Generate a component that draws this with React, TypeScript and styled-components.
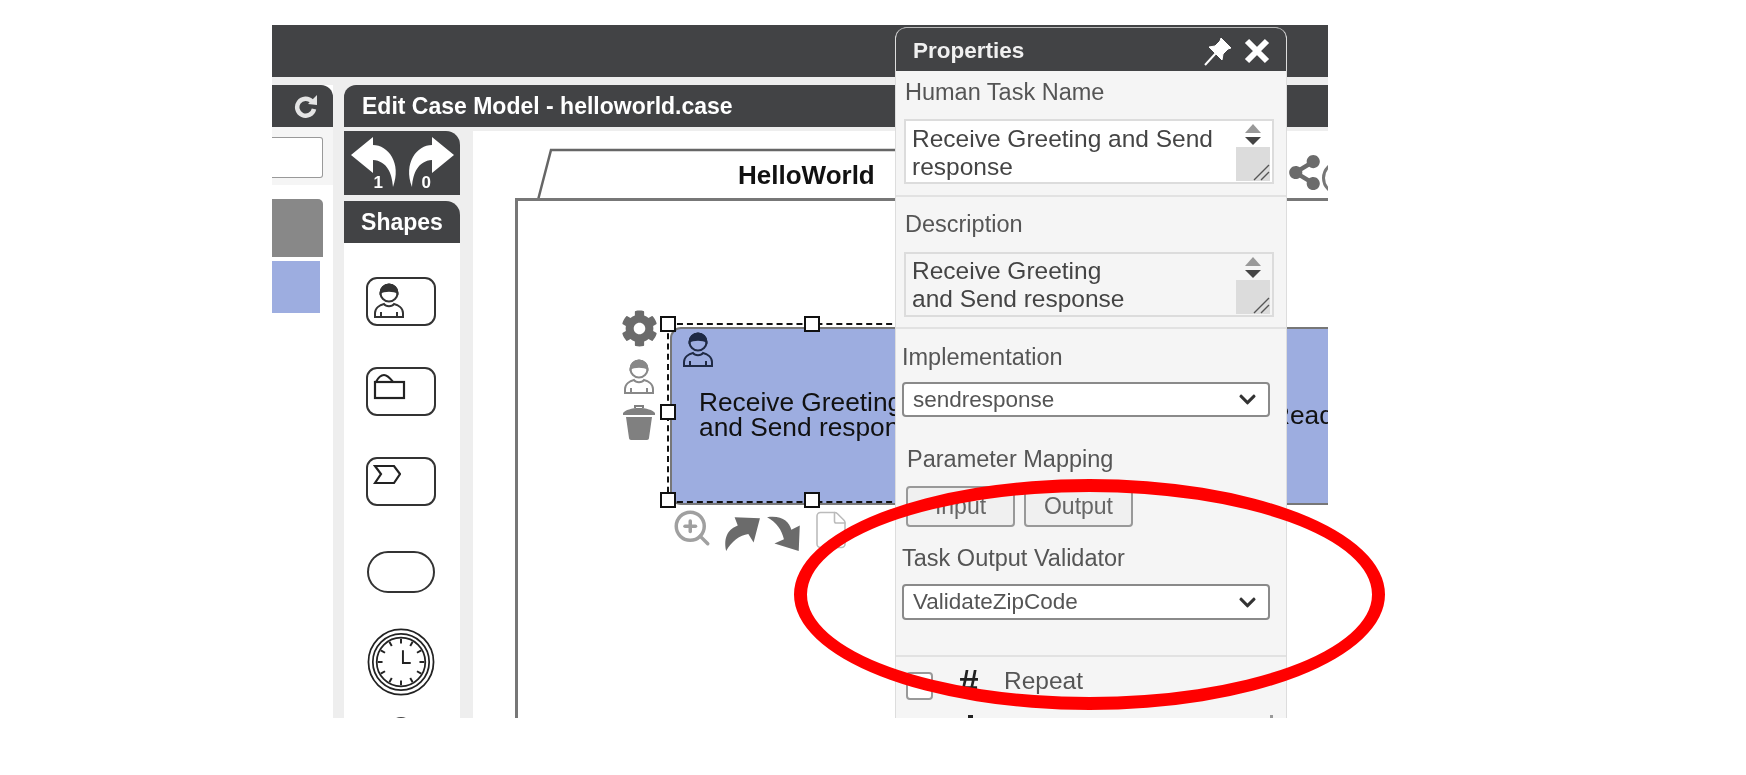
import React from "react";
import styled, { createGlobalStyle } from "styled-components";
import { FaCog, FaShareAlt, FaChevronDown } from "react-icons/fa";
import { ZoomIn, File } from "lucide-react";

const GlobalStyle = createGlobalStyle`
  html, body {
    margin: 0;
    background: #fff;
    font-family: "Liberation Sans", Arial, sans-serif;
  }
`;

const Page = styled.div`
  position: relative;
  width: 1746px;
  height: 775px;
  overflow: hidden;
  padding: 25px 0 0 272px;
  box-sizing: border-box;
`;

const Frame = styled.div`
  position: relative;
  width: 1056px;
  height: 693px;
  overflow: hidden;
  display: flex;
  flex-direction: column;
  background: #eee;
  filter: blur(0.6px);
`;

const TopBar = styled.div`
  height: 52px;
  flex: none;
  background: #424345;
  margin-bottom: 8px;
`;

const Workspace = styled.div`
  flex: 1;
  min-height: 0;
  display: flex;
  gap: 11px;
`;

const LeftPane = styled.div`
  width: 61px;
  flex: none;
  display: flex;
  flex-direction: column;
  background: #fff;
`;

const LeftHeader = styled.div`
  height: 42px;
  flex: none;
  display: flex;
  align-items: center;
  justify-content: flex-end;
  padding-right: 15px;
  box-sizing: border-box;
  background: #424345;
  border-top-right-radius: 12px;
`;

const SearchWrap = styled.div`
  height: 58px;
  flex: none;
  padding: 10px 10px 0 0;
  box-sizing: border-box;
  background: #f5f5f5;
`;

const SearchBox = styled.div`
  height: 41px;
  background: #fff;
  border: 1px solid #999;
  border-left: 0;
  border-radius: 0 3px 3px 0;
  box-sizing: border-box;
`;

const GrayRow = styled.div`
  height: 58px;
  margin: 14px 10px 0 0;
  background: #888;
  border-top-right-radius: 5px;
`;

const BlueRow = styled.div`
  height: 52px;
  margin: 4px 13px 0 0;
  background: #9dade0;
`;

const Editor = styled.div`
  flex: 1;
  min-width: 0;
  display: flex;
  flex-direction: column;
`;

const TitleBar = styled.div`
  height: 42px;
  flex: none;
  padding-left: 18px;
  display: flex;
  align-items: center;
  background: #424345;
  color: #fff;
  font-size: 23px;
  font-weight: 700;
  border-top-left-radius: 12px;
`;

const EditorBody = styled.div`
  flex: 1;
  min-height: 0;
  display: flex;
  gap: 13px;
  padding-top: 4px;
`;

const Palette = styled.div`
  width: 116px;
  flex: none;
  display: flex;
  flex-direction: column;
  gap: 6px;
`;

const PaletteHeader = styled.div<{ $tall?: boolean }>`
  height: ${(p) => (p.$tall ? 64 : 42)}px;
  flex: none;
  display: flex;
  align-items: center;
  justify-content: center;
  gap: 1px;
  background: #424345;
  color: #fff;
  font-size: 23px;
  font-weight: 700;
  border-top-right-radius: 14px;
`;

const ShapeList = styled.div`
  flex: 1;
  margin-top: -6px;
  padding: 34px 2px 0 0;
  background: #fff;
  display: flex;
  flex-direction: column;
  align-items: center;
  gap: 41px;
`;

const ShapeCard = styled.div<{ $pill?: boolean }>`
  width: ${(p) => (p.$pill ? 68 : 70)}px;
  height: ${(p) => (p.$pill ? 42 : 49)}px;
  margin-top: ${(p) => (p.$pill ? 4 : 0)}px;
  flex: none;
  box-sizing: border-box;
  border: 2px solid #333;
  border-radius: ${(p) => (p.$pill ? 21 : 11)}px;
  padding: 4px 5px;
  display: flex;
`;

const TimerSlot = styled.div`
  flex: none;
  display: flex;
  margin-top: -6px;
`;

const NextShape = styled.div`
  flex: none;
  width: 20px;
  height: 20px;
  margin-top: -20px;
  border: 2px solid #444;
  border-radius: 50%;
`;

const UndoIcon = styled.span`
  position: relative;
  display: block;
  width: 52px;
  height: 56px;
  color: #fff;
`;

const UndoCount = styled.span<{ $left: number }>`
  position: absolute;
  left: ${(p) => p.$left}px;
  bottom: -2px;
  color: #fff;
  font-size: 17px;
  font-weight: 700;
  line-height: 20px;
`;

const Canvas = styled.div`
  position: relative;
  flex: 1;
  min-width: 0;
  background: #fff;
  overflow: hidden;
`;

const CaseBox = styled.div`
  position: absolute;
  left: 42px;
  top: 67px;
  width: 1000px;
  height: 800px;
  border: 3px solid #777;
`;

const CaseTab = styled.svg`
  position: absolute;
  left: 63px;
  top: 17px;
`;

const CaseName = styled.div`
  position: absolute;
  left: 265px;
  top: 29px;
  font-size: 26px;
  font-weight: 700;
  line-height: 30px;
  color: #111;
`;

const Task = styled.div`
  position: absolute;
  left: 197px;
  top: 196px;
  width: 900px;
  height: 178px;
  box-sizing: border-box;
  background: #9dade0;
  border: 2px solid #777;
  border-radius: 11px;
`;

const TaskText = styled.div<{ $left: number; $top: number }>`
  position: absolute;
  left: ${(p) => p.$left}px;
  top: ${(p) => p.$top}px;
  font-size: 26.3px;
  line-height: 24.5px;
  color: #111;
  white-space: nowrap;
`;

const TaskType = styled.span`
  position: absolute;
  left: 10px;
  top: 3px;
`;

const Selection = styled.div`
  position: absolute;
  left: 194px;
  top: 192px;
  width: 500px;
  height: 176px;
  border: 2px dashed #111;
`;

const Handle = styled.span<{ $x: number; $y: number }>`
  position: absolute;
  left: ${(p) => p.$x - 8}px;
  top: ${(p) => p.$y - 8}px;
  width: 12px;
  height: 12px;
  background: #fff;
  border: 2px solid #111;
`;

const ToolIcon = styled.span<{ $x: number; $y: number }>`
  position: absolute;
  left: ${(p) => p.$x}px;
  top: ${(p) => p.$y}px;
  display: flex;
  color: #6b6b6b;
`;

const CutRing = styled.span`
  position: absolute;
  left: 849px;
  top: 30px;
  width: 28px;
  height: 28px;
  border: 3px solid #777;
  border-radius: 50%;
`;

const PropertiesPanel = styled.div`
  position: absolute;
  left: 623px;
  top: 2px;
  width: 392px;
  height: 700px;
  box-sizing: border-box;
  background: #f5f5f5;
  border: 1.5px solid #ddd;
  border-top-color: #bbb;
  border-radius: 12px 12px 0 0;
  color: #555;
`;

const PanelHeader = styled.div`
  height: 43px;
  display: flex;
  align-items: center;
  padding: 2px 16px 0 17px;
  box-sizing: border-box;
  background: #424345;
  color: #f0f0f0;
  font-size: 22.5px;
  font-weight: 700;
  border-radius: 10px 10px 0 0;
`;

const PanelTitle = styled.span`
  flex: 1;
`;

const PanelActions = styled.span`
  display: flex;
  align-items: center;
  gap: 12px;
`;

const PanelSection = styled.div<{ $pad: string }>`
  padding: ${(p) => p.$pad};
  border-bottom: 2px solid #e2e2e2;
`;

const FieldLabel = styled.div<{ $indent?: number; $gap?: number; $top?: number }>`
  margin: ${(p) => p.$top ?? 0}px 0 ${(p) => p.$gap ?? 13}px ${(p) => p.$indent ?? 0}px;
  font-size: 23.5px;
  line-height: 28px;
  white-space: nowrap;
`;

const TextArea = styled.div<{ $bg: string; $top: number }>`
  position: relative;
  height: 65px;
  box-sizing: border-box;
  padding: ${(p) => p.$top}px 6px 0;
  background: ${(p) => p.$bg};
  border: 2px solid #dcdcdc;
  color: #444;
  font-size: 24.5px;
  line-height: 28px;
  white-space: nowrap;
`;

const ScrollGrip = styled.span`
  position: absolute;
  right: 2px;
  top: 0;
  width: 34px;
  height: 60px;
  display: flex;
  flex-direction: column;
`;

const ScrollArrows = styled.span`
  height: 26px;
  display: flex;
  flex-direction: column;
  align-items: center;
  justify-content: center;
  gap: 4px;
`;

const Triangle = styled.i<{ $up?: boolean }>`
  width: 0;
  height: 0;
  border-left: 8px solid transparent;
  border-right: 8px solid transparent;
  border-bottom: ${(p) => (p.$up ? "9px solid #999" : "0")};
  border-top: ${(p) => (p.$up ? "0" : "8px solid #444")};
`;

const ResizeThumb = styled.span`
  flex: 1;
  background: #dcdcdc;
  display: flex;
  align-items: flex-end;
  justify-content: flex-end;
`;

const SelectBox = styled.div<{ $height: number }>`
  height: ${(p) => p.$height}px;
  box-sizing: border-box;
  display: flex;
  align-items: center;
  justify-content: space-between;
  padding: 0 11px 0 9px;
  background: #fff;
  border: 2px solid #8a8a8a;
  border-radius: 4px;
  color: #555;
  font-size: 22.5px;
`;

const ButtonRow = styled.div`
  display: flex;
  gap: 9px;
  margin-left: 4px;
`;

const MapButton = styled.div`
  width: 109px;
  height: 41px;
  box-sizing: border-box;
  display: flex;
  align-items: center;
  justify-content: center;
  background: #f0f0f0;
  border: 2px solid #999;
  border-radius: 4px;
  font-size: 23px;
  color: #666;
`;

const OptionRow = styled.div`
  display: flex;
  align-items: flex-start;
  padding: 15px 0 0 10px;
`;

const CheckBox = styled.span`
  width: 27px;
  height: 28px;
  box-sizing: border-box;
  background: #fff;
  border: 2px solid #999;
  border-radius: 4px;
`;

const HashMark = styled.span`
  width: 46px;
  margin: -4px 0 0 25px;
  color: #222;
  font-size: 36px;
  font-weight: 700;
  font-style: italic;
  line-height: 32px;
`;

const OptionLabel = styled.span`
  margin-top: -5px;
  font-size: 24.5px;
  line-height: 28px;
`;

const NextRow = styled.div`
  display: flex;
  justify-content: space-between;
  padding: 15px 13px 0 72px;
`;

const PeekMark = styled.span<{ $wide?: boolean }>`
  width: ${(p) => (p.$wide ? 5 : 3)}px;
  height: 8px;
  background: ${(p) => (p.$wide ? "#222" : "#999")};
`;

const Callout = styled.div`
  position: absolute;
  left: 794px;
  top: 479px;
  width: 591px;
  height: 231px;
  box-sizing: border-box;
  border: 13px solid #ff0000;
  border-radius: 50%;
`;

function PersonIcon({ color = "#333", width = 32, height = 36 }: { color?: string; width?: number; height?: number }) {
  return (
    <svg width={width} height={height} viewBox="0 0 32 36" fill="none" stroke={color} strokeWidth="2">
      <circle cx="16" cy="10" r="8.5" />
      <path d="M7.5 10a8.5 8.5 0 0 1 17 0c-3-3-14-3-17 0z" fill={color} />
      <path d="M2 34v-4c0-5 5-8 9-9 2 3 8 3 10 0 4 1 9 4 9 9v4z" />
      <path d="M8 34v-5M24 34v-5" />
    </svg>
  );
}

function RefreshGlyph() {
  return (
    <svg width="24" height="24" viewBox="0 0 24 24" fill="none" stroke="#e4e4e4">
      <path d="M18 7.5A8.5 8.5 0 1 0 20 15" strokeWidth="4.5" />
      <path d="M14 10 23 11 23 1z" fill="#e4e4e4" stroke="none" />
    </svg>
  );
}

function TurnArrow({ flip }: { flip?: boolean }) {
  return (
    <svg width="52" height="54" viewBox="0 0 52 54" style={flip ? { transform: "scaleX(-1)" } : undefined}>
      <path d="M1 20 23 2v8c15 0 29 18 20 42-1-14-6-26-20-27v13z" fill="#fff" />
    </svg>
  );
}

function BendArrow({ down }: { down?: boolean }) {
  return (
    <svg width="38" height="38" viewBox="0 0 36 36" fill="#6b6b6b">
      {down ? (
        <path d="M1 3c14-2 21 4 23 12l8-4-1 24-23-7 9-4C15 15 10 8 1 3z" />
      ) : (
        <path d="M3 35c-3-14 3-21 11-24L11 3l24 1-6 23-5-8C16 20 8 26 3 35z" />
      )}
    </svg>
  );
}

function PinGlyph() {
  return (
    <svg width="28" height="30" viewBox="0 0 28 30" fill="#fff" stroke="#fff">
      <path d="M1 29 12 17" strokeWidth="2" />
      <path d="M17 2 27 12l-3 1-5 5 -1 6L5 11l6-1 5-5z" strokeWidth="1" />
    </svg>
  );
}

function CloseGlyph() {
  return (
    <svg width="26" height="26" viewBox="0 0 26 26" stroke="#fff" strokeWidth="6">
      <path d="M3 3 23 23M23 3 3 23" />
    </svg>
  );
}

function FolderGlyph() {
  return (
    <svg width="33" height="28" viewBox="0 0 33 28" fill="none" stroke="#222" strokeWidth="2.2">
      <rect x="2" y="9" width="29" height="16" />
      <path d="M3 9c2-4 5-7 8-7s6 3 9 7" />
    </svg>
  );
}

function StageGlyph() {
  return (
    <svg width="28" height="24" viewBox="0 0 28 24" fill="none" stroke="#222" strokeWidth="2.2">
      <path d="M2 3h19l6 8-6 9H2l6-9z" />
    </svg>
  );
}

function TimerGlyph() {
  const ticks = Array.from({ length: 12 }, (_, i) => i * 30);
  return (
    <svg width="68" height="68" viewBox="0 0 70 70" fill="none" stroke="#222">
      <circle cx="35" cy="35" r="33.5" strokeWidth="1.8" />
      <circle cx="35" cy="35" r="29" strokeWidth="1.8" />
      <circle cx="35" cy="35" r="25" strokeWidth="1.8" />
      {ticks.map((a) => (
        <line key={a} x1="35" y1="11" x2="35" y2="16" strokeWidth="2" transform={`rotate(${a} 35 35)`} />
      ))}
      <path d="M37 23v13h8" strokeWidth="2" />
    </svg>
  );
}

function TrashGlyph() {
  return (
    <svg width="34" height="38" viewBox="0 0 34 38" fill="#808080">
      <path d="M12 5V2h10v3h-2V4h-6v1z" />
      <path d="M1 10c2-3 9-5 16-5s14 2 16 5v2H1z" />
      <path d="M4 14h26l-3 21c0 1-1 2-2 2H9c-1 0-2-1-2-2z" />
    </svg>
  );
}

function ResizeLines() {
  return (
    <svg width="18" height="18" viewBox="0 0 18 18" stroke="#555" strokeWidth="1.4">
      <path d="M2 17 17 2M9 17l8-8" />
    </svg>
  );
}

function TextAreaField({ bg, lines, top = 3 }: { bg: string; lines: string[]; top?: number }) {
  return (
    <TextArea $bg={bg} $top={top}>
      {lines.map((line) => (
        <div key={line}>{line}</div>
      ))}
      <ScrollGrip>
        <ScrollArrows>
          <Triangle $up />
          <Triangle />
        </ScrollArrows>
        <ResizeThumb>
          <ResizeLines />
        </ResizeThumb>
      </ScrollGrip>
    </TextArea>
  );
}

function SelectField({ value, height }: { value: string; height: number }) {
  return (
    <SelectBox $height={height}>
      <span>{value}</span>
      <FaChevronDown size={19} color="#333" />
    </SelectBox>
  );
}

export default function App() {
  return (
    <Page>
      <GlobalStyle />
      <Frame>
        <TopBar />
        <Workspace>
          <LeftPane>
            <LeftHeader>
              <RefreshGlyph />
            </LeftHeader>
            <SearchWrap>
              <SearchBox />
            </SearchWrap>
            <GrayRow />
            <BlueRow />
          </LeftPane>
          <Editor>
            <TitleBar>Edit Case Model - helloworld.case</TitleBar>
            <EditorBody>
              <Palette>
                <PaletteHeader $tall>
                  <UndoIcon>
                    <TurnArrow />
                    <UndoCount $left={24}>1</UndoCount>
                  </UndoIcon>
                  <UndoIcon>
                    <TurnArrow flip />
                    <UndoCount $left={19}>0</UndoCount>
                  </UndoIcon>
                </PaletteHeader>
                <PaletteHeader>Shapes</PaletteHeader>
                <ShapeList>
                  <ShapeCard>
                    <PersonIcon width={32} height={36} />
                  </ShapeCard>
                  <ShapeCard>
                    <FolderGlyph />
                  </ShapeCard>
                  <ShapeCard>
                    <StageGlyph />
                  </ShapeCard>
                  <ShapeCard $pill />
                  <TimerSlot>
                    <TimerGlyph />
                  </TimerSlot>
                  <NextShape />
                </ShapeList>
              </Palette>
              <Canvas>
                <CaseTab width="740" height="54" fill="none" stroke="#666" strokeWidth="2.5">
                  <polyline points="2,52 15,2 740,2" />
                </CaseTab>
                <CaseName>HelloWorld</CaseName>
                <CaseBox />
                <Task>
                  <TaskType>
                    <PersonIcon color="#1f2a44" />
                  </TaskType>
                  <TaskText $left={27} $top={61}>
                    Receive Greeting
                    <br />
                    and Send response
                  </TaskText>
                  <TaskText $left={599} $top={74}>Read</TaskText>
                </Task>
                <Selection />
                <Handle $x={195} $y={193} />
                <Handle $x={339} $y={193} />
                <Handle $x={195} $y={281} />
                <Handle $x={195} $y={369} />
                <Handle $x={339} $y={369} />
                <ToolIcon $x={148} $y={179}>
                  <FaCog size={37} />
                </ToolIcon>
                <ToolIcon $x={150} $y={228}>
                  <PersonIcon color="#888" />
                </ToolIcon>
                <ToolIcon $x={149} $y={272}>
                  <TrashGlyph />
                </ToolIcon>
                <ToolIcon $x={198} $y={376}>
                  <ZoomIn size={42} strokeWidth={2} color="#a0a0a0" />
                </ToolIcon>
                <ToolIcon $x={250} $y={383}>
                  <BendArrow />
                </ToolIcon>
                <ToolIcon $x={293} $y={383}>
                  <BendArrow down />
                </ToolIcon>
                <ToolIcon $x={337} $y={378}>
                  <File size={42} strokeWidth={0.9} color="#bbb" />
                </ToolIcon>
                <ToolIcon $x={814} $y={24}>
                  <FaShareAlt size={35} />
                </ToolIcon>
                <CutRing />
              </Canvas>
            </EditorBody>
          </Editor>
        </Workspace>
        <PropertiesPanel>
          <PanelHeader>
            <PanelTitle>Properties</PanelTitle>
            <PanelActions>
              <PinGlyph />
              <CloseGlyph />
            </PanelActions>
          </PanelHeader>
          <PanelSection $pad="7px 12px 11px 8px">
            <FieldLabel $indent={1}>Human Task Name</FieldLabel>
            <TextAreaField bg="#fff" top={4} lines={["Receive Greeting and Send", "response"]} />
          </PanelSection>
          <PanelSection $pad="13px 12px 10px 8px">
            <FieldLabel $indent={1} $gap={14}>Description</FieldLabel>
            <TextAreaField bg="#f5f5f5" lines={["Receive Greeting", "and Send response"]} />
          </PanelSection>
          <PanelSection $pad="14px 16px 35px 6px">
            <FieldLabel $gap={11}>Implementation</FieldLabel>
            <SelectField value="sendresponse" height={35} />
            <FieldLabel $indent={5} $top={28} $gap={13}>Parameter Mapping</FieldLabel>
            <ButtonRow>
              <MapButton>Input</MapButton>
              <MapButton>Output</MapButton>
            </ButtonRow>
            <FieldLabel $top={17} $gap={12}>Task Output Validator</FieldLabel>
            <SelectField value="ValidateZipCode" height={36} />
          </PanelSection>
          <OptionRow>
            <CheckBox />
            <HashMark>#</HashMark>
            <OptionLabel>Repeat</OptionLabel>
          </OptionRow>
          <NextRow>
            <PeekMark $wide />
            <PeekMark />
          </NextRow>
        </PropertiesPanel>
      </Frame>
      <Callout />
    </Page>
  );
}
